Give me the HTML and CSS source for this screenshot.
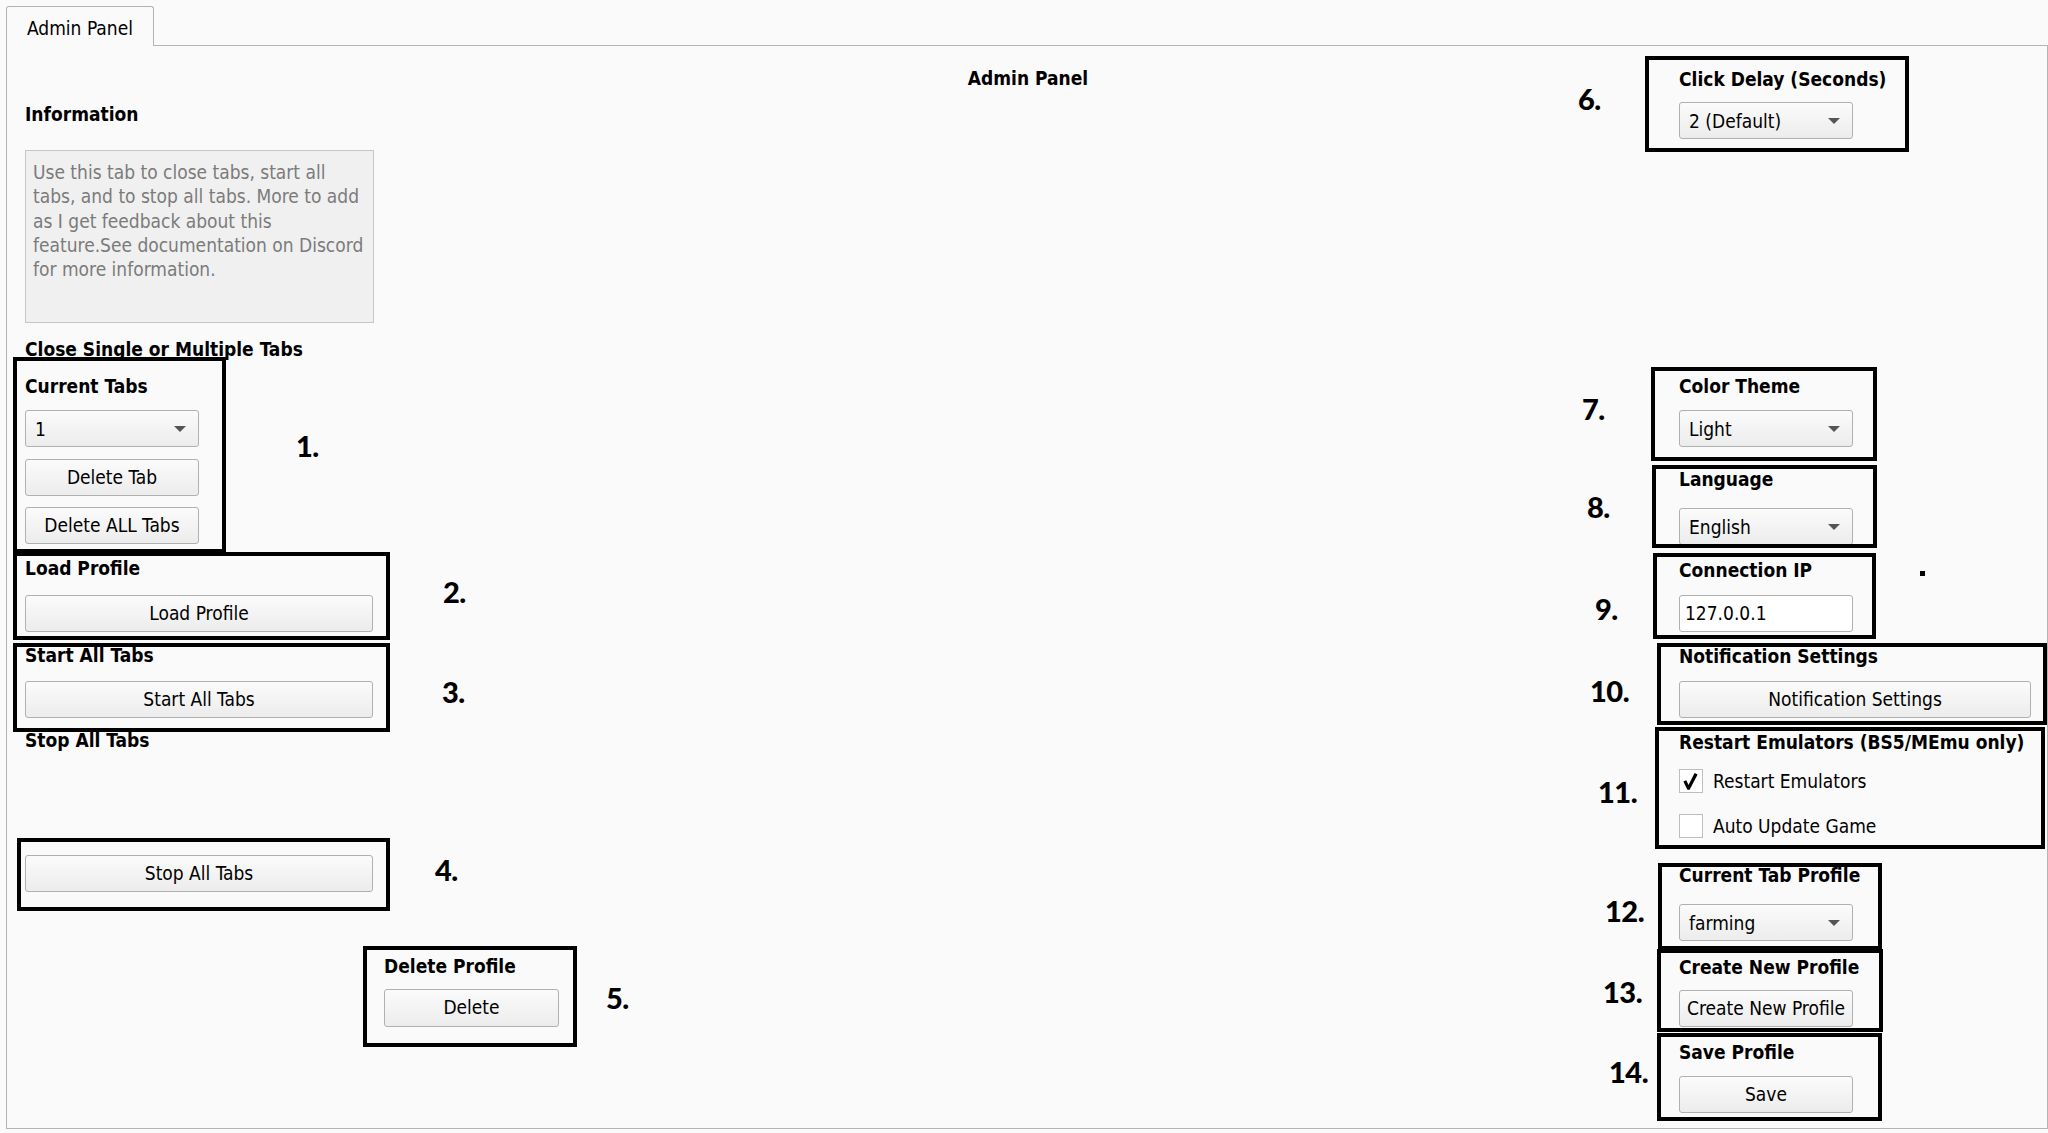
FILE: index.html
```html
<!DOCTYPE html>
<html>
<head>
<meta charset="utf-8">
<title>Admin Panel</title>
<link rel="stylesheet" href="styles.css">
</head>
<body>
<div class="tabbar">
  <div class="tab">Admin Panel</div>
</div>
<div class="panel">
  <div class="title">Admin Panel</div>

  <div class="col-left">
    <div class="label mt12">Information</div>
    <div class="infobox mt24">Use this tab to close tabs, start all<br>tabs, and to stop all tabs. More to add<br>as I get feedback about this<br>feature.See documentation on Discord<br>for more information.</div>
    <div class="label mt14">Close Single or Multiple Tabs</div>
    <div class="label mt13">Current Tabs</div>
    <div class="combo w-s mt12"><span>1</span><span class="arrow"></span></div>
    <div class="btn w-s mt12">Delete Tab</div>
    <div class="btn w-s mt11">Delete ALL Tabs</div>
    <div class="label mt12">Load Profile</div>
    <div class="btn w-l mt15">Load Profile</div>
    <div class="label mt11">Start All Tabs</div>
    <div class="btn w-l mt14">Start All Tabs</div>
    <div class="label mt10">Stop All Tabs</div>
    <div class="btn w-l mt103">Stop All Tabs</div>
    <div class="del-group">
      <div class="label mt62">Delete Profile</div>
      <div class="btn w-d mt11 h38">Delete</div>
    </div>
  </div>

  <div class="col-right">
    <div class="label mt21">Click Delay (Seconds)</div>
    <div class="combo w-s mt11"><span>2 (Default)</span><span class="arrow"></span></div>
    <div class="label mt235">Color Theme</div>
    <div class="combo w-s mt12"><span>Light</span><span class="arrow"></span></div>
    <div class="label mt20">Language</div>
    <div class="combo w-s mt17"><span>English</span><span class="arrow"></span></div>
    <div class="label mt13">Connection IP</div>
    <div class="input w-s mt13">127.0.0.1</div>
    <div class="label mt12">Notification Settings</div>
    <div class="btn w-full mt13">Notification Settings</div>
    <div class="label mt12">Restart Emulators (BS5/MEmu only)</div>
    <div class="check-row mt15">
      <span class="checkbox"><svg width="22" height="22" viewBox="0 0 22 22"><path d="M3.4 11.4 L6.3 10.2 L8.5 15.0 L14.6 3.0 L17.6 4.4 L9.6 19.8 L7.4 19.8 Z" fill="#000"/></svg></span>
      <span>Restart Emulators</span>
    </div>
    <div class="check-row mt21">
      <span class="checkbox"></span>
      <span>Auto Update Game</span>
    </div>
    <div class="label mt25">Current Tab Profile</div>
    <div class="combo w-s mt17"><span>farming</span><span class="arrow"></span></div>
    <div class="label mt14">Create New Profile</div>
    <div class="btn w-s mt11">Create New Profile</div>
    <div class="label mt13">Save Profile</div>
    <div class="btn w-s mt12">Save</div>
  </div>

  <div class="annotations">
    <div class="box b1"></div>
    <div class="box b2"></div>
    <div class="box b3"></div>
    <div class="box b4"></div>
    <div class="box b5"></div>
    <div class="box b6"></div>
    <div class="box b7"></div>
    <div class="box b8"></div>
    <div class="box b9"></div>
    <div class="box b10"></div>
    <div class="box b11"></div>
    <div class="box b12"></div>
    <div class="box b13"></div>
    <div class="box b14"></div>
    <div class="num n1">1.</div>
    <div class="num n2">2.</div>
    <div class="num n3">3.</div>
    <div class="num n4">4.</div>
    <div class="num n5">5.</div>
    <div class="num n6">6.</div>
    <div class="num n7">7.</div>
    <div class="num n8">8.</div>
    <div class="num n9">9.</div>
    <div class="num n10">10.</div>
    <div class="num n11">11.</div>
    <div class="num n12">12.</div>
    <div class="num n13">13.</div>
    <div class="num n14">14.</div>
    <div class="dot"></div>
  </div>
</div>
</body>
</html>
```

FILE: styles.css
```css
* { box-sizing: border-box; }

html, body {
  margin: 0;
  padding: 0;
  width: 2048px;
  height: 1133px;
  overflow: hidden;
  background: #fafafa;
}

body {
  font-family: "DejaVu Sans Condensed", "DejaVu Sans", sans-serif;
  font-size: 19px;
  line-height: 24px;
  color: #000;
}

.tabbar {
  display: flex;
  height: 45px;
  padding: 6px 0 0 6px;
}

.tab {
  position: relative;
  z-index: 1;
  height: 40px;
  margin-bottom: -1px;
  padding: 9px 20px 0;
  border: 1px solid #b4b4b4;
  border-bottom: none;
  border-radius: 3px 3px 0 0;
  background: #fafafa;
  white-space: nowrap;
}

.panel {
  position: relative;
  margin-left: 6px;
  width: 2042px;
  height: 1084px;
  border: 1px solid #b4b4b4;
  background: #fafafa;
  padding: 0 16px 0 18px;
  display: grid;
  grid-template-columns: 560px 1fr 352px;
  grid-template-rows: 44px 1fr;
}

.title {
  grid-column: 1 / 4;
  grid-row: 1;
  margin-top: 20px;
  text-align: center;
  font-weight: bold;
}

.col-left {
  grid-column: 1;
  grid-row: 2;
  display: flex;
  flex-direction: column;
  align-items: flex-start;
}

.col-right {
  grid-column: 3;
  grid-row: 1 / 3;
  display: flex;
  flex-direction: column;
  align-items: flex-start;
}

.label {
  font-weight: bold;
  white-space: nowrap;
  height: 24px;
}

.infobox {
  width: 349px;
  height: 173px;
  padding: 9px 7px;
  background: #f0f0f0;
  border: 1px solid #c6c6c6;
  color: #7b7b7b;
  white-space: nowrap;
  line-height: 24.3px;
}

.btn, .combo, .input {
  height: 37px;
  border: 1px solid #b0b0b0;
  border-radius: 3px;
  background: linear-gradient(#fbfbfb, #ececec);
  white-space: nowrap;
  line-height: 34px;
}

.btn {
  text-align: center;
}

.combo {
  display: flex;
  justify-content: space-between;
  align-items: center;
  padding: 0 12px 0 9px;
}

.arrow {
  width: 0;
  height: 0;
  border-left: 6px solid transparent;
  border-right: 6px solid transparent;
  border-top: 6px solid #555;
}

.input {
  background: #fff;
  padding: 0 5px;
}

.h38 { height: 38px; }

.w-s { width: 174px; }
.w-l { width: 348px; }
.w-d { width: 175px; }
.w-full { width: 352px; }

.del-group {
  margin-left: 359px;
  display: flex;
  flex-direction: column;
}

.check-row {
  display: flex;
  align-items: center;
  gap: 10px;
  height: 24px;
  white-space: nowrap;
}

.checkbox {
  width: 24px;
  height: 24px;
  border: 1px solid #bdbdbd;
  background: #fff;
  display: flex;
  align-items: center;
  justify-content: center;
}

.mt10 { margin-top: 10px; }
.mt11 { margin-top: 11px; }
.mt12 { margin-top: 12px; }
.mt13 { margin-top: 13px; }
.mt14 { margin-top: 14px; }
.mt15 { margin-top: 15px; }
.mt17 { margin-top: 17px; }
.mt20 { margin-top: 20px; }
.mt21 { margin-top: 21px; }
.mt24 { margin-top: 24px; }
.mt25 { margin-top: 25px; }
.mt62 { margin-top: 62px; }
.mt103 { margin-top: 103px; }
.mt235 { margin-top: 235px; }

/* annotation overlay */
.annotations {
  position: absolute;
  inset: 0;
  pointer-events: none;
}

.box {
  position: absolute;
  border: 4px solid #000;
}

.b1 { left: 6px; top: 311px; width: 213px; height: 196px; }
.b2 { left: 6px; top: 506px; width: 377px; height: 88px; }
.b3 { left: 6px; top: 597px; width: 377px; height: 89px; }
.b4 { left: 10px; top: 792px; width: 373px; height: 73px; }
.b5 { left: 356px; top: 900px; width: 214px; height: 101px; }
.b6 { left: 1638px; top: 10px; width: 264px; height: 96px; }
.b7 { left: 1644px; top: 321px; width: 226px; height: 94px; }
.b8 { left: 1645px; top: 419px; width: 225px; height: 83px; }
.b9 { left: 1646px; top: 507px; width: 223px; height: 86px; }
.b10 { left: 1650px; top: 597px; width: 390px; height: 82px; }
.b11 { left: 1648px; top: 681px; width: 390px; height: 122px; }
.b12 { left: 1651px; top: 817px; width: 224px; height: 87px; }
.b13 { left: 1650px; top: 903px; width: 226px; height: 83px; }
.b14 { left: 1650px; top: 987px; width: 225px; height: 88px; }

.num {
  position: absolute;
  font-family: Lato, "Open Sans", sans-serif;
  font-weight: 900;
  font-size: 29px;
  line-height: 29px;
  letter-spacing: -0.5px;
  white-space: nowrap;
}

.n1 { left: 289px; top: 385px; }
.n2 { left: 436px; top: 531px; }
.n3 { left: 435px; top: 631px; }
.n4 { left: 428px; top: 809px; }
.n5 { left: 599px; top: 937px; }
.n6 { left: 1571px; top: 38px; }
.n7 { left: 1575px; top: 348px; }
.n8 { left: 1580px; top: 446px; }
.n9 { left: 1588px; top: 548px; }
.n10 { left: 1583px; top: 630px; }
.n11 { left: 1591px; top: 731px; }
.n12 { left: 1598px; top: 850px; }
.n13 { left: 1596px; top: 931px; }
.n14 { left: 1602px; top: 1011px; }

.dot {
  position: absolute;
  left: 1913px;
  top: 525px;
  width: 5px;
  height: 5px;
  background: #000;
}
```
